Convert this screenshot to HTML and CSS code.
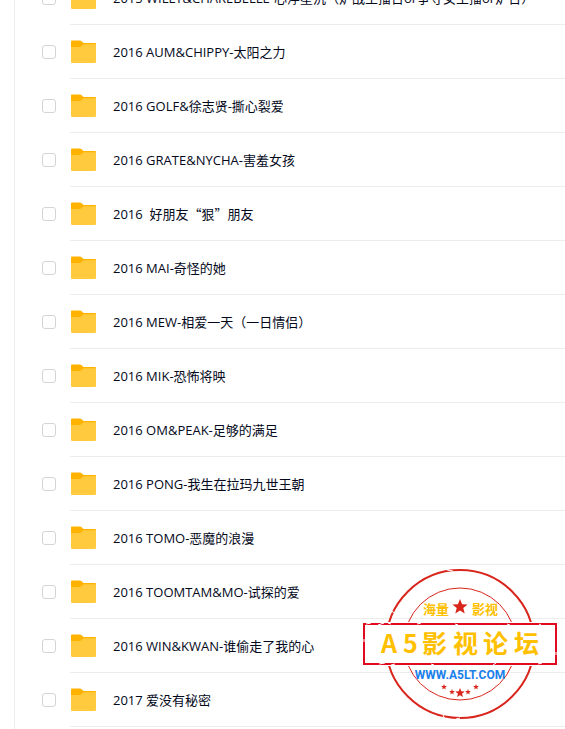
FILE: index.html
```
<!DOCTYPE html>
<html lang="zh-CN">
<head>
    <meta charset="UTF-8">
    <meta name="viewport" content="width=device-width, initial-scale=1.0">
    <title>全部文件</title>
    <link rel="stylesheet" href="styles.css">
</head>
<body>
    <svg class="defs" aria-hidden="true">
        <symbol id="folder" viewBox="0 0 26 24">
            <path fill="#ffb300" d="M0 1.5Q0 .5 1 .5H9Q10 .5 10.700 1.200L12.500 3H24Q25 3 25 4V12H0Z"/>
            <path fill="#ffca3e" d="M0 7H8.500Q9.600 7 10.500 6.200L12 4.800Q12.600 4.300 13.500 4.300H24Q25 4.300 25 5.300V22Q25 23 24 23H1Q0 23 0 22Z"/>
        </symbol>
        <symbol id="star" viewBox="-10 -10 20 20">
            <path fill="#d9261c" d="M0-10 2.600-3.400 9.500-3.100 4.100 1.300 5.900 8.100 0 4.300-5.900 8.100-4.100 1.300-9.500-3.100-2.600-3.400Z"/>
        </symbol>
    </svg>

    <main class="panel">
        <ul class="file-list">
            <li class="file"><input type="checkbox" id="f0"><label for="f0"><svg class="icon"><use href="#folder"/></svg><span>2015 WILLY&amp;CHAREBELLE-心浮星沉（炉战主播台or争夺女主播or炉台）</span></label></li>
            <li class="file"><input type="checkbox" id="f1"><label for="f1"><svg class="icon"><use href="#folder"/></svg><span>2016 AUM&amp;CHIPPY-太阳之力</span></label></li>
            <li class="file"><input type="checkbox" id="f2"><label for="f2"><svg class="icon"><use href="#folder"/></svg><span>2016 GOLF&amp;徐志贤-撕心裂爱</span></label></li>
            <li class="file"><input type="checkbox" id="f3"><label for="f3"><svg class="icon"><use href="#folder"/></svg><span>2016 GRATE&amp;NYCHA-害羞女孩</span></label></li>
            <li class="file"><input type="checkbox" id="f4"><label for="f4"><svg class="icon"><use href="#folder"/></svg><span>2016 &nbsp;<span class="cjk">好朋友“狠”朋友</span></span></label></li>
            <li class="file"><input type="checkbox" id="f5"><label for="f5"><svg class="icon"><use href="#folder"/></svg><span>2016 MAI-奇怪的她</span></label></li>
            <li class="file"><input type="checkbox" id="f6"><label for="f6"><svg class="icon"><use href="#folder"/></svg><span>2016 MEW-相爱一天（一日情侣）</span></label></li>
            <li class="file"><input type="checkbox" id="f7"><label for="f7"><svg class="icon"><use href="#folder"/></svg><span>2016 MIK-恐怖将映</span></label></li>
            <li class="file"><input type="checkbox" id="f8"><label for="f8"><svg class="icon"><use href="#folder"/></svg><span>2016 OM&amp;PEAK-足够的满足</span></label></li>
            <li class="file"><input type="checkbox" id="f9"><label for="f9"><svg class="icon"><use href="#folder"/></svg><span>2016 PONG-我生在拉玛九世王朝</span></label></li>
            <li class="file"><input type="checkbox" id="f10"><label for="f10"><svg class="icon"><use href="#folder"/></svg><span>2016 TOMO-恶魔的浪漫</span></label></li>
            <li class="file"><input type="checkbox" id="f11"><label for="f11"><svg class="icon"><use href="#folder"/></svg><span>2016 TOOMTAM&amp;MO-试探的爱</span></label></li>
            <li class="file"><input type="checkbox" id="f12"><label for="f12"><svg class="icon"><use href="#folder"/></svg><span>2016 WIN&amp;KWAN-谁偷走了我的心</span></label></li>
            <li class="file"><input type="checkbox" id="f13"><label for="f13"><svg class="icon"><use href="#folder"/></svg><span>2017 爱没有秘密</span></label></li>
        </ul>
    </main>

    <svg class="stamp" viewBox="0 0 194 152" role="img" aria-label="A5影视论坛">
        <circle class="ring" cx="97" cy="76" r="74"/>
        <circle class="ring thin" cx="97" cy="76" r="56"/>
        <!-- worn spots in the ink -->
        <path class="worn" d="M28 43l6 3M84 2l6 1M121 148l3 3M80 147l2 5M93 151l4-1M163 37l3-2"/>
        <rect x="0" y="54" width="194" height="44" fill="#fff"/>
        <rect class="frame" x="1" y="56" width="192" height="40"/>
        <path class="worn" d="M3 56l5-1M15 57l6-2M25 55l3 1M54 56l4-1M92 56l3 1M144 56l3 1M176 56l2 1M16 96l6-1M28 97l4-1M68 96l3 1M130 97l3-2M175 96l4-1M1 71v3M193 84v3"/>
        <text class="tag" x="60" y="46">海量</text>
        <text class="tag" x="109" y="46">影视</text>
        <use href="#star" x="89" y="31" width="16" height="16"/>
        <text class="name" x="18 40 59 90 120 151" y="85">A5影视论坛</text>
        <text class="site" x="97" y="111">WWW.A5LT.COM</text>
        <use href="#star" x="78" y="116" width="6" height="6"/>
        <use href="#star" x="86" y="121" width="6" height="6"/>
        <use href="#star" x="92" y="120" width="10" height="10"/>
        <use href="#star" x="102" y="121" width="6" height="6"/>
        <use href="#star" x="110" y="116" width="6" height="6"/>
    </svg>
</body>
</html>
```
FILE: styles.css
```
* {
    box-sizing: border-box;
}
body {
    margin: 0;
    min-height: 100vh;
    overflow: hidden;
    background: #fff;
    color: #03081a;
    font-family: "Open Sans", "Noto Sans CJK SC", sans-serif;
    font-size: 13px;
}
.defs {
    display: none;
}
.panel {
    height: 100vh;
    margin-left: 14px;
    border-left: 1px solid #eee;
    overflow: hidden;
}
/* list is scrolled part way through the first row */
.file-list {
    list-style: none;
    margin: -29px 0 0;
    padding: 0 0 0 27px;
}
.file {
    display: flex;
    align-items: center;
    gap: 14px;
    height: 54px;
}
.file input {
    appearance: none;
    flex: none;
    width: 14px;
    height: 14px;
    margin: 0;
    border: 1px solid #d4d4d6;
    border-radius: 3px;
    background: #fff;
}
.file input:checked {
    background: #06a7ff;
    border-color: #06a7ff;
}
.file label {
    flex: 1;
    display: flex;
    align-items: center;
    gap: 16px;
    height: 54px;
    padding-left: 1px;
    border-bottom: 1px solid #ededed;
    white-space: nowrap;
    cursor: pointer;
}
.icon {
    flex: none;
    width: 26px;
    height: 24px;
}
/* full-width quotes */
.cjk {
    font-family: "Noto Sans CJK SC", sans-serif;
}
.stamp {
    position: absolute;
    right: 8px;
    bottom: 9px;
    width: 194px;
    height: 152px;
    pointer-events: none;
}
.ring {
    fill: none;
    stroke: #d9261c;
    stroke-width: 2;
}
.thin {
    stroke-width: 1;
}
.frame {
    fill: #fff;
    stroke: #e00b20;
    stroke-width: 2;
}
.worn {
    fill: none;
    stroke: #fff;
    stroke-width: 1;
}
.tag,
.name {
    fill: #ffc000;
    font-family: "Noto Sans CJK SC", sans-serif;
    font-weight: bold;
}
.tag {
    font-size: 13px;
}
.name {
    font-size: 25px;
}
.site {
    fill: #1a80ea;
    font-family: Roboto, "Liberation Sans", sans-serif;
    font-size: 12px;
    font-weight: bold;
    text-anchor: middle;
}
```
